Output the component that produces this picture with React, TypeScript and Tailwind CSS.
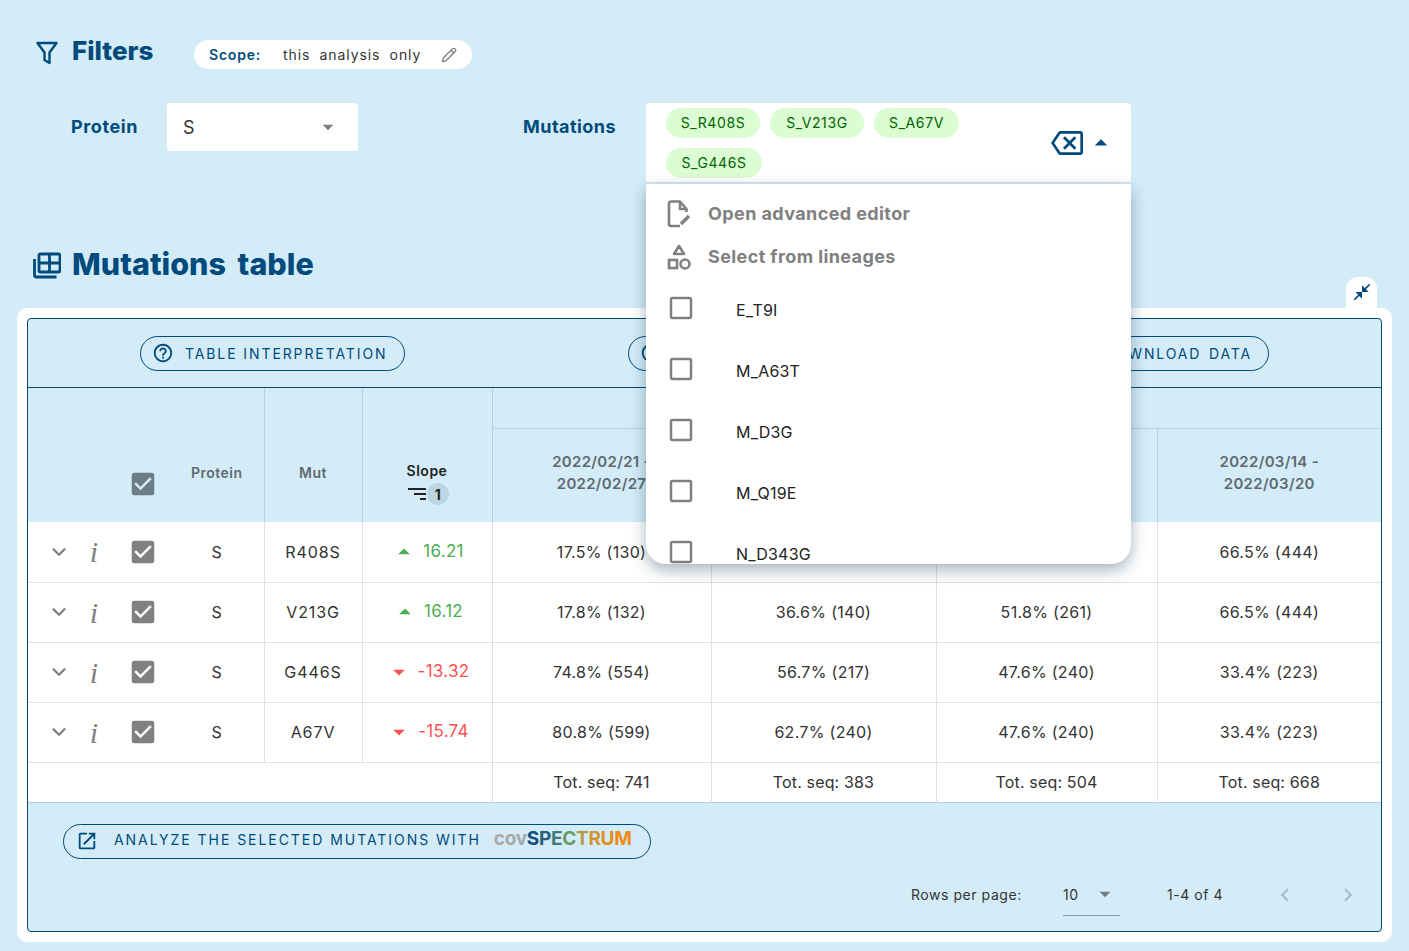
import { ChevronDown, Pencil } from "lucide-react";
import {
  MdArrowDropDown,
  MdArrowDropUp,
  MdCheckBox,
  MdCheckBoxOutlineBlank,
  MdChevronLeft,
  MdChevronRight,
  MdCloseFullscreen,
  MdHelpOutline,
  MdInfoOutline,
  MdOpenInNew,
  MdOutlineBackspace,
  MdOutlineFileDownload,
  MdSort,
} from "react-icons/md";

const rows = [
  { mut: "R408S", slope: "16.21", up: true, vals: ["17.5% (130)", "36.6% (140)", "51.8% (261)", "66.5% (444)"] },
  { mut: "V213G", slope: "16.12", up: true, vals: ["17.8% (132)", "36.6% (140)", "51.8% (261)", "66.5% (444)"] },
  { mut: "G446S", slope: "-13.32", up: false, vals: ["74.8% (554)", "56.7% (217)", "47.6% (240)", "33.4% (223)"] },
  { mut: "A67V", slope: "-15.74", up: false, vals: ["80.8% (599)", "62.7% (240)", "47.6% (240)", "33.4% (223)"] },
];
const dates = [
  ["2022/02/21 -", "2022/02/27"],
  ["2022/02/28 -", "2022/03/06"],
  ["2022/03/07 -", "2022/03/13"],
  ["2022/03/14 -", "2022/03/20"],
];
const totals = ["741", "383", "504", "668"];
const chips = [
  { label: "S_R408S", width: "w-[94px]" },
  { label: "S_V213G", width: "w-[94px]" },
  { label: "S_A67V", width: "w-[85px]" },
  { label: "S_G446S", width: "w-[96px]" },
];
const lineages = ["E_T9I", "M_A63T", "M_D3G", "M_Q19E", "N_D343G"];
const logo = [
  ["S", "#0f4f7d"],
  ["P", "#27607a"],
  ["E", "#417a78"],
  ["C", "#6b9a62"],
  ["T", "#b39a45"],
  ["R", "#cf9433"],
  ["U", "#e08e22"],
  ["M", "#ef8a12"],
];

function PillButton({ icon, children, className }: { icon: React.ReactNode; children: React.ReactNode; className: string }) {
  return (
    <div className={`flex h-[35px] items-center rounded-full border border-[#004b7c] text-[#004b7c] ${className}`}>
      {icon}
      {children}
    </div>
  );
}

export default function App() {
  return (
    <div className="h-[951px] overflow-hidden bg-[#d3ecf8] font-['Inter',sans-serif] text-[#222]">
      <div className="flex items-start pl-[36px] pt-[40px]">
        <svg width="22" height="24" viewBox="0 0 22 24" fill="none" stroke="#004b7c" strokeWidth="2.4" className="mt-[1px]">
          <path d="M1.5 2h19l-7 9.5V22l-5-3v-7.5z" strokeLinejoin="round" />
        </svg>
        <div className="ml-[14px] -mt-[4px] w-[122px] text-[26px] leading-[30px] font-extrabold text-[#004b7c]">Filters</div>
        <div className="flex h-[29px] w-[278px] items-center rounded-full bg-white pl-[15px] text-[14px] [word-spacing:3px]">
          <span className="w-[74px] font-semibold tracking-[0.8px] text-[#004b7c]">Scope:</span>
          <span className="w-[158px] tracking-[0.9px] text-[#333] [word-spacing:4.5px]">this analysis only</span>
          <Pencil size={16} strokeWidth={2} className="text-[#808080]" />
        </div>
      </div>

      <div className="mt-[34px] flex items-start pl-[71px]">
        <div className="-mt-[1px] flex h-[48px] w-[96px] items-center text-[18px] font-bold tracking-[0.6px] text-[#004b7c]">Protein</div>
        <div className="flex h-[48px] w-[191px] items-center justify-between rounded-[3px] bg-white pl-[16px] pr-[17px] text-[18px] text-[#333]">
          S
          <MdArrowDropDown size={26} className="text-[#808080]" />
        </div>
        <div className="ml-[165px] -mt-[1px] flex h-[48px] w-[123px] items-center text-[18px] font-bold tracking-[0.45px] text-[#004b7c]">Mutations</div>
        <div className="relative flex h-[80px] w-[485px] items-center justify-between rounded-t-[4px] border-b border-[#d8e2e8] bg-white pl-[20px] pr-[15px]">
          <div className="flex w-[340px] flex-wrap gap-x-[10px] gap-y-[10px]">
            {chips.map((c) => (
              <span key={c.label} className={`flex h-[30px] items-center justify-center rounded-full bg-[#dcfdd3] text-[14px] tracking-[0.6px] text-[#006400] ${c.width}`}>
                {c.label}
              </span>
            ))}
          </div>
          <div className="flex items-center gap-[3px] text-[#004b7c]">
            <MdOutlineBackspace size={32} className="-scale-x-100 rotate-180" />
            <MdArrowDropUp size={30} />
          </div>

          {/* open dropdown lies over the table */}
          <div className="absolute left-0 top-[81px] z-10 h-[380px] w-[485px] overflow-hidden rounded-b-[20px] bg-white shadow-[0_6px_16px_rgba(0,40,70,0.35)]">
            <div className="flex h-[21px] items-center pl-[21px] mt-[19px]">
              <svg width="26" height="28" viewBox="0 0 26 28" fill="none" stroke="#808080" strokeWidth="2.6" strokeLinejoin="round">
                <path d="M13 26H4a2 2 0 0 1-2-2V3.500a2 2 0 0 1 2-2h9l6.500 7.500v3" />
                <path d="M14 24l8-8" strokeWidth="3.500" />
                <path d="M13 2v7h6" />
              </svg>
              <span className="ml-[15px] text-[18px] font-bold tracking-[0.4px] text-[#808080]">Open advanced editor</span>
            </div>
            <div className="mt-[22px] flex h-[21px] items-center pl-[21px]">
              <svg width="26" height="26" viewBox="0 0 26 26" fill="none" stroke="#808080" strokeWidth="2.600">
                <path d="M12 2l5 8H7z" strokeLinejoin="round" />
                <rect x="2" y="16" width="8" height="8" />
                <circle cx="18" cy="20" r="4.500" />
              </svg>
              <span className="ml-[15px] text-[18px] font-bold tracking-[0.4px] text-[#808080]">Select from lineages</span>
            </div>
            <div className="mt-[12px]">
              {lineages.map((l) => (
                <div key={l} className="flex h-[61px] items-center pl-[20px]">
                  <MdCheckBoxOutlineBlank size={30} className="-mt-[3px] text-[#808080]" />
                  <span className="ml-[40px] text-[16px] tracking-[0.2px]">{l}</span>
                </div>
              ))}
            </div>
          </div>
        </div>
      </div>

      <div className="mt-[60px] flex h-[40px] items-center pl-[33px]">
        <svg width="28" height="28" viewBox="0 0 28 28" fill="none" stroke="#004b7c" strokeWidth="2.800" className="mt-[3px]">
          <rect x="6" y="3" width="21" height="18" rx="1.500" />
          <path d="M6 12h21M16.500 3v18" />
          <path d="M1.500 8v16a2 2 0 0 0 2 2h20" />
        </svg>
        <div className="ml-[11px] mt-[1px] text-[30.5px] font-extrabold text-[#004b7c] [word-spacing:5px]">Mutations table</div>
      </div>

      <div className="-mt-[6px] flex justify-end pr-[32px]">
        <div className="flex h-[31px] w-[31px] items-center justify-center rounded-t-[12px] bg-white text-[#004b7c]">
          <MdCloseFullscreen size={20} className="-mt-[2px]" />
        </div>
      </div>

      <div className="mx-[17px] rounded-[10px] bg-white p-[10px]">
        <div className="h-[614px] rounded-[4px] border border-[#004b7c] bg-[#d3ecf8]">
          <div className="flex h-[69px] items-center border-b border-[#004b7c] pl-[112px]">
            <PillButton
              className="w-[265px] pl-[11px] text-[14px] tracking-[1.9px]"
              icon={<MdHelpOutline size={22} className="mr-[11px]" />}
            >
              TABLE INTERPRETATION
            </PillButton>
            <PillButton
              className="ml-[223px] w-[262px] pl-[11px] text-[14px] tracking-[1.9px]"
              icon={<MdInfoOutline size={22} className="mr-[11px]" />}
            >
              CUSTOMIZE
            </PillButton>
            <PillButton
              className="ml-[1px] w-[378px] justify-end pr-[16px] text-[14px] tracking-[1.85px] [word-spacing:2px]"
              icon={<MdOutlineFileDownload size={22} className="mr-[11px]" />}
            >
              DOWNLOAD DATA
            </PillButton>
          </div>

          <table className="w-[1353px] table-fixed border-collapse text-center text-[16px] tracking-[0.3px] text-[#333]">
            <colgroup>
              <col className="w-[50px]" />
              <col className="w-[32px]" />
              <col className="w-[66px]" />
              <col className="w-[88px]" />
              <col className="w-[98px]" />
              <col className="w-[130px]" />
              <col className="w-[219px]" />
              <col className="w-[225px]" />
              <col className="w-[221px]" />
              <col className="w-[224px]" />
            </colgroup>
            <thead className="text-[14px] font-semibold tracking-[0.5px] text-[#5f6a70]">
              <tr className="h-[40px]">
                <th rowSpan={2} />
                <th rowSpan={2} />
                <th rowSpan={2} className="pb-[23px] align-bottom">
                  <MdCheckBox size={30} className="mx-auto text-[#6c7d86]" />
                </th>
                <th rowSpan={2} className="border-r border-[#b8d0dd] pb-[39px] pr-[6px] align-bottom font-semibold">Protein</th>
                <th rowSpan={2} className="border-r border-[#b8d0dd] pb-[39px] align-bottom font-semibold">Mut</th>
                <th rowSpan={2} className="border-r border-[#b8d0dd] pb-[16px] align-bottom font-semibold text-[#222]">
                  <div>Slope</div>
                  <div className="mt-[1px] flex items-center justify-center">
                    <MdSort size={24} className="-mr-[2px] -scale-x-100" />
                    <span className="flex h-[22px] w-[22px] items-center justify-center rounded-full bg-[#bcd5e2] font-bold">1</span>
                  </div>
                </th>
                <th colSpan={4} className="border-b border-[#b8d0dd]" />
              </tr>
              <tr className="h-[94px]">
                {dates.map((d, i) => (
                  <th key={d[0]} className={`pb-[4px] text-[15px] leading-[22px] font-semibold tracking-[0.3px] ${i < 3 ? "border-r border-[#b8d0dd]" : ""}`}>
                    {d[0]}
                    <br />
                    {d[1]}
                  </th>
                ))}
              </tr>
            </thead>
            <tbody className="bg-white">
              {rows.map((r) => (
                <tr key={r.mut} className="h-[60px] border-b border-[#e0e0e0]">
                  <td className="pl-[20px]">
                    <ChevronDown size={22} strokeWidth={2.5} className="text-[#808080]" />
                  </td>
                  <td className="font-['Liberation_Serif',serif] text-[30px] italic text-[#808080]">i</td>
                  <td>
                    <MdCheckBox size={30} className="mx-auto text-[#808080]" />
                  </td>
                  <td className="border-r border-[#e0e0e0] pr-[6px]">S</td>
                  <td className="border-r border-[#e0e0e0] tracking-[0.9px]">{r.mut}</td>
                  <td className="border-r border-[#e0e0e0]">
                    <div className="flex items-center justify-center">
                      <MdArrowDropDown size={28} className={r.up ? "mr-[5px] rotate-180 text-[#4caf50]" : "mr-[5px] text-[#ff5252]"} />
                      <span className={r.up ? "-mt-[1px] text-[17px] text-[#4caf50]" : "-mt-[1px] text-[17px] text-[#ff5252]"}>{r.slope}</span>
                    </div>
                  </td>
                  {r.vals.map((v, i) => (
                    <td key={i} className={i < 3 ? "border-r border-[#e0e0e0]" : ""}>{v}</td>
                  ))}
                </tr>
              ))}
              <tr className="h-[40px] border-b border-[#b8d0dd]">
                <td colSpan={6} className="border-r border-[#e0e0e0]" />
                {totals.map((t, i) => (
                  <td key={t} className={`tracking-[0.15px] ${i < 3 ? "border-r border-[#e0e0e0]" : ""}`}>Tot. seq: {t}</td>
                ))}
              </tr>
            </tbody>
          </table>

          <div className="pl-[35px] pt-[21px]">
            <PillButton
              className="w-[588px] pl-[12px] text-[14px] tracking-[1.95px]"
              icon={<MdOpenInNew size={22} className="mr-[16px]" />}
            >
              <span className="-mt-[3px] whitespace-nowrap">ANALYZE THE SELECTED MUTATIONS WITH</span>
              <span className="-mt-[3px] ml-[13px] flex text-[19px] font-bold tracking-[-0.3px]">
                <span className="text-[#a8a8a8]">cov</span>
                {logo.map(([ch, col]) => (
                  <span key={ch} style={{ color: col }}>{ch}</span>
                ))}
              </span>
            </PillButton>
          </div>

          <div className="mt-[15px] flex h-[42px] items-start pl-[883px] text-[14px] tracking-[0.55px] text-[#333]">
            <span className="mt-[10px] w-[152px]">Rows per page:</span>
            <div className="flex h-[42px] w-[57px] items-center justify-between border-b border-[#8a9aa3] pr-[2px]">
              <span>10</span>
              <MdArrowDropDown size={26} className="text-[#6e7c84]" />
            </div>
            <span className="ml-[47px] mt-[10px] w-[105px]">1-4 of 4</span>
            <MdChevronLeft size={26} className="mt-[8px] text-[#a9bcc6]" />
            <MdChevronRight size={26} className="ml-[37px] mt-[8px] text-[#a9bcc6]" />
          </div>
        </div>
      </div>
    </div>
  );
}
